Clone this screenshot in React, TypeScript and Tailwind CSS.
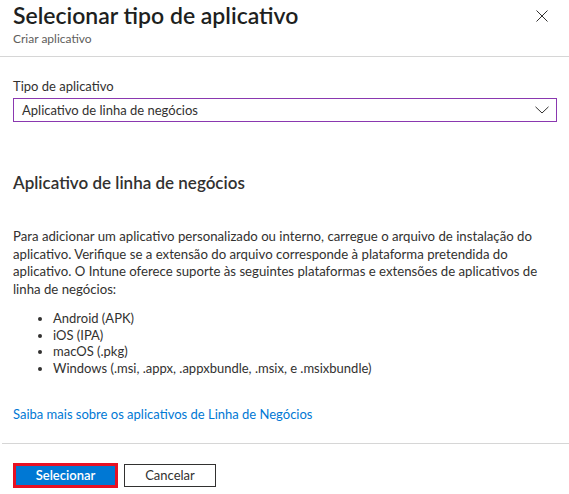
import React from "react";

export default function App() {
  return (
    <div className="w-[569px] h-[494px] bg-white text-[#323130] overflow-hidden" style={{ fontFamily: '"Segoe UI", "Lato", "Noto Sans", sans-serif' }}>
      <div className="relative border-b border-[#d6d6d6] pb-[9px] px-[13px]">
        <h1 className="text-[23px] leading-[30px] font-semibold text-[#201f1e]">Selecionar tipo de aplicativo</h1>
        <div className="mt-[1px] text-[12px] leading-[16px] text-[#605e5c]">Criar aplicativo</div>
        <svg className="absolute left-[536px] top-[10px]" width="12" height="12" viewBox="0 0 12 12">
          <path d="M0.5 0.5 L11.5 11.5 M11.5 0.5 L0.5 11.5" stroke="#323130" strokeWidth="1" fill="none" />
        </svg>
      </div>
      <div className="px-[13px]">
        <div className="mt-[20px] text-[13px] leading-[18px]">Tipo de aplicativo</div>
        <div className="mt-[3px] w-[544px] h-[24px] border border-[#8a38b0] flex items-center justify-between pl-[8px] pr-[7px]">
          <span className="text-[13px] leading-[22px]">Aplicativo de linha de negócios</span>
          <svg width="14" height="8" viewBox="0 0 14 8">
            <path d="M0.5 0.8 L7 7 L13.5 0.8" stroke="#323130" strokeWidth="1" fill="none" />
          </svg>
        </div>
        <h2 className="mt-[49px] text-[17px] leading-[24px] font-semibold">Aplicativo de linha de negócios</h2>
        <p className="mt-[33px] text-[13.2px] leading-[17.5px] pr-[8px]">
          Para adicionar um aplicativo personalizado ou interno, carregue o arquivo de instalação do aplicativo. Verifique se a extensão do arquivo corresponde à plataforma pretendida do aplicativo. O Intune oferece suporte às seguintes plataformas e extensões de aplicativos de linha de negócios:
        </p>
        <ul className="mt-[12px] text-[13px] leading-[16.7px] list-disc pl-[40px]">
          <li>Android (APK)</li>
          <li>iOS (IPA)</li>
          <li>macOS (.pkg)</li>
          <li>Windows (.msi, .appx, .appxbundle, .msix, e .msixbundle)</li>
        </ul>
        <div className="mt-[28px] text-[13px] leading-[18px] text-[#0078d4]">Saiba mais sobre os aplicativos de Linha de Negócios</div>
      </div>
      <div className="mt-[20px] ml-[2px] border-t border-[#d6d6d6] pt-[19px] pl-[11px] flex items-center gap-[6px]">
        <button className="w-[105px] h-[25px] border-[3px] border-[#e81123] bg-[#0078d4] text-white text-[13px] font-semibold leading-[19px]">Selecionar</button>
        <button className="w-[92px] h-[23px] border border-[#323130] bg-white text-[13px] leading-[21px]">Cancelar</button>
      </div>
    </div>
  );
}
